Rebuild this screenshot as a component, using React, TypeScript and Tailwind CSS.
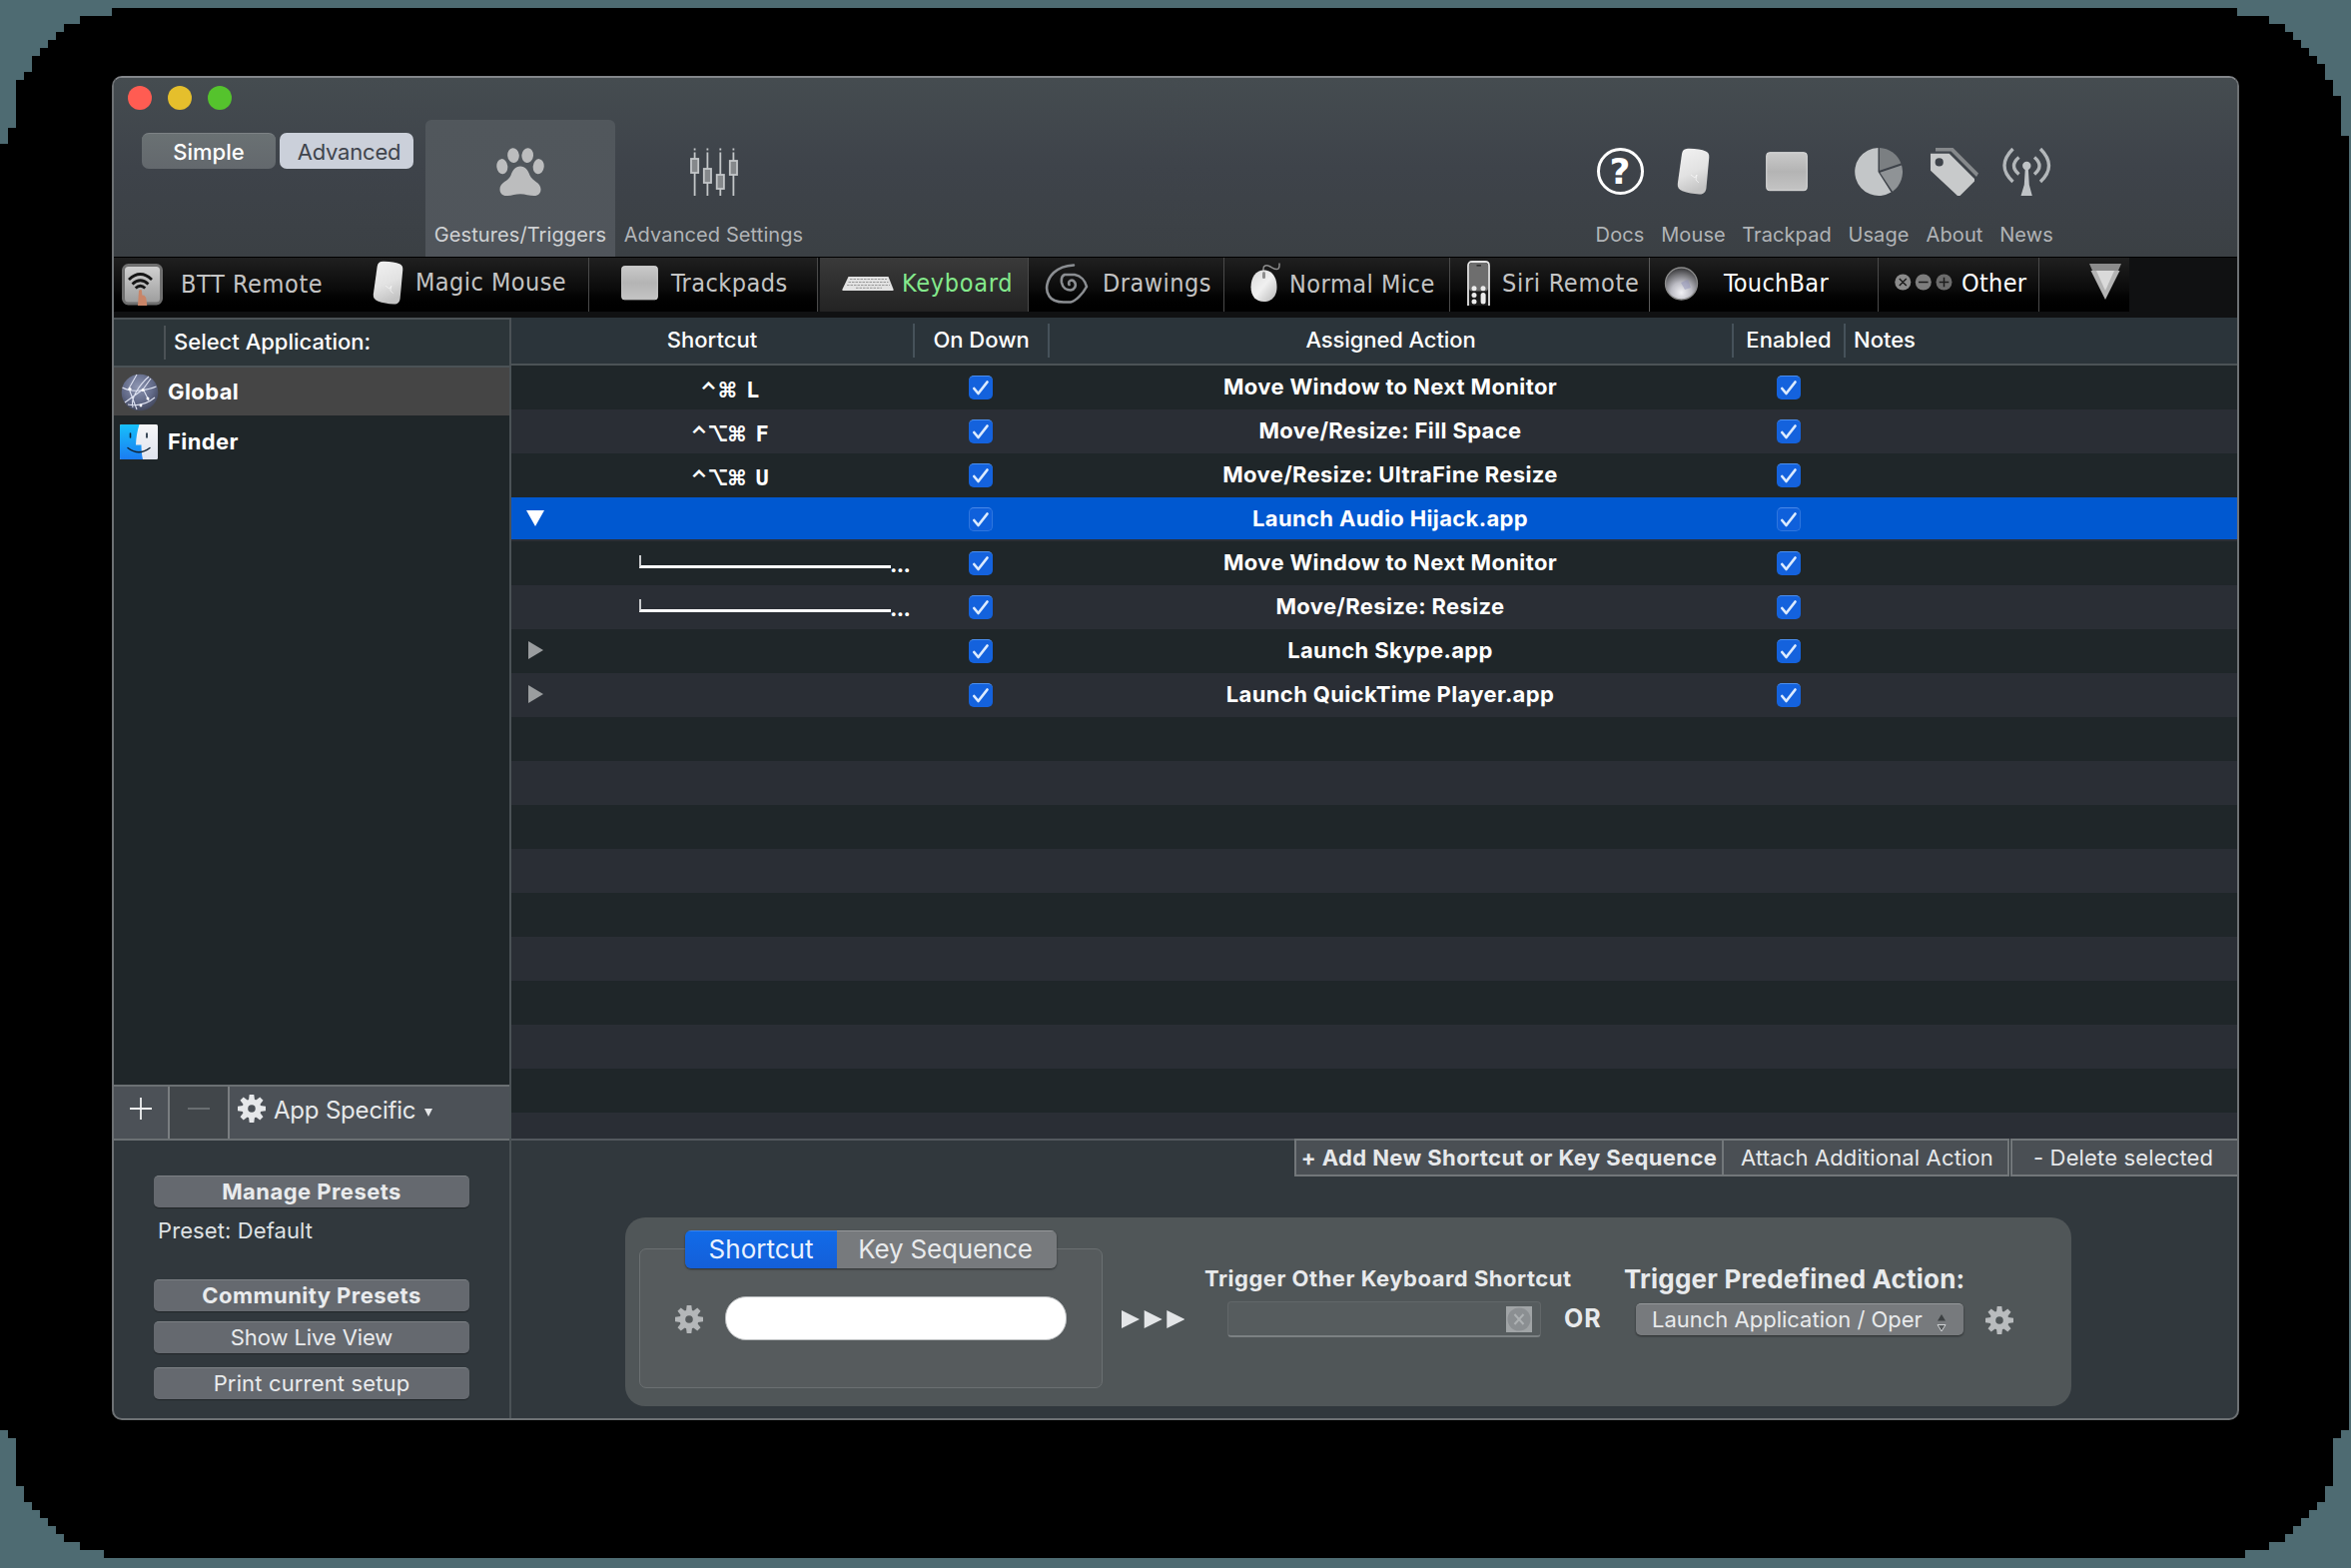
import React from "react";

const GEAR_TEETH = [0, 45, 90, 135, 180, 225, 270, 315];

function Gear({ size, color, hole }: { size: number; color: string; hole: string }) {
  return (
    <svg width={size} height={size} viewBox="0 0 28 28" className="shrink-0">
      <g fill={color}>
        {GEAR_TEETH.map((a) => (
          <path key={a} d="M11.7 0h4.6l.9 7h-6.4z" transform={`rotate(${a} 14 14)`} />
        ))}
        <circle cx="14" cy="14" r="9.6" />
      </g>
      <circle cx="14" cy="14" r="3.8" fill={hole} />
    </svg>
  );
}

function Paw() {
  return (
    <svg width="48" height="48" viewBox="0 0 48 48" fill="#bcbdbe">
      <ellipse cx="17" cy="7.6" rx="5.8" ry="7.4" transform="rotate(-6 17 7.6)" />
      <ellipse cx="31.2" cy="7.6" rx="5.8" ry="7.4" transform="rotate(6 31.2 7.6)" />
      <ellipse cx="5.8" cy="18.7" rx="5.5" ry="7.6" transform="rotate(-6 5.8 18.7)" />
      <ellipse cx="42.2" cy="18.7" rx="5.5" ry="7.6" transform="rotate(6 42.2 18.7)" />
      <path d="M24 18.500c5 0 7.500 3.500 9.500 9 2.500 6 11 7 11 14 0 4-2.500 6.500-6.500 6.500-5 0-9-1.800-14-1.800S15 48 10 48c-4 0-6.500-2.500-6.500-6.500 0-7 8.500-8 11-14 2-5.500 4.500-9 9.500-9z" />
    </svg>
  );
}

function Sliders() {
  const knobs: [number, number][] = [[4.6, 11], [17.4, 21], [30.3, 27], [43.4, 13]];
  return (
    <svg width="48" height="48" viewBox="0 0 48 48">
      {knobs.map(([x, y]) => (
        <g key={x}>
          <path d={`M${x} 4.500V48M${x} .5v2`} stroke="#c3c6c8" strokeWidth="1.800" />
          <rect x={x - 3.600} y={y} width="7.200" height="14" fill="#85888b" stroke="#c3c6c8" strokeWidth="1.800" />
        </g>
      ))}
    </svg>
  );
}

function MagicMouse({ w, h }: { w: number; h: number }) {
  return (
    <svg width={w} height={h} viewBox="0 0 33 47">
      <defs>
        <linearGradient id="mm" x1="0" y1="0" x2=".3" y2="1">
          <stop offset="0" stopColor="#f2f2f2" />
          <stop offset=".6" stopColor="#e2e2e2" />
          <stop offset="1" stopColor="#c4c4c4" />
        </linearGradient>
      </defs>
      <path d="M11 .7C18 .5 25 1.500 29 3.500c2.500 1.300 3.500 3 3.300 6L29.500 40c-.5 4.500-3 6.800-7 6.500-6-.5-12-1.500-17-3.300C2 41.800.5 39.500.8 36L5 6C5.500 2.500 7.500.8 11 .7z" fill="url(#mm)" />
      <path d="M14 27l4 3 2-3-1 5 3 3" fill="none" stroke="#fff" strokeOpacity=".6" />
    </svg>
  );
}

function PadIcon({ w, h }: { w: number; h: number }) {
  return (
    <svg width={w} height={h} viewBox="0 0 42 40" preserveAspectRatio="none">
      <defs>
        <linearGradient id="pad" x1="0" y1="0" x2="0" y2="1">
          <stop offset="0" stopColor="#c9c9c9" />
          <stop offset=".5" stopColor="#b4b4b4" />
          <stop offset="1" stopColor="#c4c4c4" />
        </linearGradient>
      </defs>
      <rect x=".7" y=".7" width="40.600" height="38" rx="3" fill="url(#pad)" stroke="#dedede" strokeWidth="1" />
    </svg>
  );
}

function UsagePie() {
  return (
    <svg width="48" height="48" viewBox="0 0 48 48">
      <path d="M23.500 0A24 24 0 1 0 36.500 44.600L23.500 24z" fill="#c3c6c8" />
      <path d="M25 0v22.800L46.400 15.500A24 24 0 0 0 25 0z" fill="#7b7f82" />
      <path d="M47 17.400L25.400 24.800 38 43.700A24 24 0 0 0 47 17.400z" fill="#8f9396" />
    </svg>
  );
}

function Tags() {
  return (
    <svg width="48" height="48" viewBox="0 0 48 48">
      <path d="M5 0h17.500L48 25.500 46 29 20.500 3.600H5z" fill="#85888b" />
      <path fillRule="evenodd" d="M0 5.700h18.700L44 31v2.500L29.500 48H27L0 22.700zM8.700 10.300a4.100 4.100 0 1 0 0 8.200 4.100 4.100 0 0 0 0-8.200z" fill="#c8cacb" />
    </svg>
  );
}

function Antenna() {
  return (
    <svg width="49" height="48" viewBox="0 0 49 48">
      <circle cx="24.300" cy="18" r="4.200" fill="#bfc3c6" />
      <path d="M22.800 20h3l1 17 3 11H18.500l3.300-11z" fill="#bfc3c6" />
      <g fill="none" stroke="#b3b7ba" strokeWidth="3.400">
        <path d="M16.500 9.500Q6.500 18 16.500 26.500M32 9.500Q42 18 32 26.500M10.500 1Q-6.500 18 10.500 34M38 1Q55 18 38 34" />
      </g>
    </svg>
  );
}

function RemoteIcon() {
  return (
    <svg width="41" height="42" viewBox="0 0 41 42">
      <defs>
        <linearGradient id="btt" x1="0" y1="0" x2="0" y2="1">
          <stop offset="0" stopColor="#d2d2d2" />
          <stop offset="1" stopColor="#9c9c9c" />
        </linearGradient>
      </defs>
      <rect x="1.500" y="1.500" width="38" height="38.500" rx="5" fill="url(#btt)" stroke="#6f6f6f" strokeWidth="3" />
      <g fill="none" stroke="#161616" strokeWidth="2.800">
        <path d="M7 16Q18.500 5 30 16" />
        <path d="M10.500 20.500Q18.500 13 26.500 20.500" />
        <path d="M13.700 24.500Q18.500 20 23.300 24.500" />
      </g>
      <path d="M16 42l1-15c1.500-1.500 3-1 3 .5l.3 4c3 0 4.200 2 4.300 5l.6 5.500z" fill="#c98568" />
    </svg>
  );
}

function KeyboardIcon() {
  return (
    <svg width="52" height="16" viewBox="0 0 52 16">
      <path d="M6.500 1h40l5 12.500v1.500H.5v-1.500z" fill="#e2e2e2" />
      <path d="M8 3.500h37M6.500 6.500h40M5 9.500h43M14 12.300h26" stroke="#9a9a9a" strokeWidth="1" strokeDasharray="2.500 1" />
    </svg>
  );
}

function Spiral() {
  return (
    <svg width="44" height="40" viewBox="0 0 44 40" fill="none" stroke="#8b8e92" strokeWidth="2.600" strokeLinecap="round" strokeLinejoin="round">
      <path d="M29 1.500C20 2 14 4.500 9 9 2 16 0 26 4.500 32.500 8 38 14 38.500 19 38.500h7c5-1 12-8 16-15.500C40.500 17 36 12 30 11H20c-2.500 1-3.500 4.500-3 8 1 5 5 7.500 9 7.500 4-.5 6-4.500 4-8-2.500-3.500-7-1.500-5.500 2.500" />
    </svg>
  );
}

function WiredMouse() {
  return (
    <svg width="31" height="40" viewBox="0 0 31 40">
      <defs>
        <linearGradient id="wm" x1="0" y1="0" x2="1" y2="1">
          <stop offset="0" stopColor="#d9d9d9" />
          <stop offset=".5" stopColor="#f0f0f0" />
          <stop offset="1" stopColor="#b5b5b5" />
        </linearGradient>
      </defs>
      <path d="M13 9V6c0-3 3-4 6-2.500 4 2 7 4.500 9 2.500 1.500-1.500 1-4 1-5.500" fill="none" stroke="#8d8d8d" strokeWidth="1.500" />
      <path d="M13.500 7.500c8 0 13 7 13 17 0 9-5 14.500-13 14.500S.5 33.500.5 24.500c0-10 5-17 13-17z" fill="url(#wm)" />
      <rect x="12" y="9" width="3" height="7" rx="1.500" fill="#8d8d8d" />
    </svg>
  );
}

function SiriRemote() {
  return (
    <svg width="23" height="46" viewBox="0 0 23 46">
      <path d="M1 45V5c0-2.500 1.500-4 4-4h13c2.500 0 4 1.500 4 4v40" fill="#1a1a1a" stroke="#e4e4e4" strokeWidth="1.800" />
      <rect x="2" y="2" width="19" height="28.500" rx="3" fill="#6e6e6e" />
      <rect x="9.500" y="4.200" width="4.500" height="1.300" fill="#222" />
      <g fill="#ececec">
        <circle cx="7" cy="27.800" r="2.500" />
        <circle cx="16" cy="27.800" r="2.500" />
        <circle cx="7" cy="34.500" r="2.500" />
        <circle cx="7" cy="41" r="2.500" />
        <rect x="13.600" y="32" width="5" height="11.500" rx="2.500" />
      </g>
    </svg>
  );
}

function Orb() {
  return (
    <svg width="35" height="34" viewBox="0 0 35 34" className="mb-0.5">
      <defs>
        <radialGradient id="orb" cx=".5" cy=".78" r=".8">
          <stop offset="0" stopColor="#f1f1f5" />
          <stop offset=".4" stopColor="#bcbcc4" />
          <stop offset=".75" stopColor="#6a6a6e" />
          <stop offset="1" stopColor="#2c2c2e" />
        </radialGradient>
      </defs>
      <circle cx="17.500" cy="17" r="16" fill="url(#orb)" stroke="#8b8b8b" strokeWidth="1.300" />
      <path d="M17 16l7-3 3 8-6 2z" fill="#8d8fb5" opacity=".5" />
    </svg>
  );
}

function OtherDots() {
  return (
    <svg width="58" height="17" viewBox="0 0 58 17" className="mb-1.5">
      <circle cx="8.300" cy="8.500" r="8" fill="#8b8b8b" />
      <circle cx="28.800" cy="8.500" r="8" fill="#7d7d7d" />
      <circle cx="49.500" cy="8.500" r="8" fill="#6c6c6c" />
      <path d="M4.800 5l7 7m0-7l-7 7M24 8.500h9.600M44.700 8.500h9.600M49.500 3.700v9.600" stroke="#1c1c1c" strokeWidth="1.500" />
    </svg>
  );
}

function GlobeIcon() {
  return (
    <svg width="38" height="38" viewBox="0 0 38 38">
      <defs>
        <radialGradient id="globe" cx=".45" cy=".35" r=".7">
          <stop offset="0" stopColor="#8f97b3" />
          <stop offset=".6" stopColor="#626a88" />
          <stop offset="1" stopColor="#3d4256" />
        </radialGradient>
      </defs>
      <circle cx="19" cy="19" r="18.300" fill="url(#globe)" />
      <g fill="none" stroke="#dfe3f2" strokeWidth="1.100">
        <path d="M1.500 14q7 4 17 3t17-4M28 3q-8 7-13 16t-3 15M4 29l18-13 8-11M16 1L8 15l8 21M7 31q15 3 27-7M23 17l5 10" />
      </g>
      <g fill="#fff">
        <circle cx="9" cy="15.500" r="1.600" />
        <circle cx="22" cy="16.500" r="1.600" />
        <circle cx="27" cy="25" r="1.500" />
        <circle cx="20" cy="32" r="1.400" />
      </g>
    </svg>
  );
}

function FinderIcon() {
  return (
    <svg width="38" height="35" viewBox="0 0 38 35">
      <defs>
        <linearGradient id="fa" x1="0" y1="0" x2="0" y2="1">
          <stop offset="0" stopColor="#17c0fa" />
          <stop offset="1" stopColor="#1b7cf2" />
        </linearGradient>
        <linearGradient id="fb" x1="0" y1="0" x2="0" y2="1">
          <stop offset="0" stopColor="#f6f6f8" />
          <stop offset="1" stopColor="#dfe4ee" />
        </linearGradient>
      </defs>
      <rect width="38" height="35" rx="1.500" fill="url(#fb)" />
      <path d="M1.500 0H19.500C17.500 6 16.300 13 16 20.500h5.500C21.500 26 22 31 23 35H1.500A1.500 1.500 0 0 1 0 33.500v-32A1.500 1.500 0 0 1 1.500 0z" fill="url(#fa)" />
      <path d="M10.500 9v4M27 9v4" stroke="#123" strokeWidth="1.600" strokeLinecap="round" />
      <path d="M8 23.500q11 8.500 22 0" fill="none" stroke="#123" strokeWidth="1.500" strokeLinecap="round" />
    </svg>
  );
}

function Check({ selected }: { selected?: boolean }) {
  return (
    <div
      className={
        selected
          ? "h-6 w-6 rounded-[5px] border border-[#2f76de] border-t-[#4a88e8] bg-[#0f60db]"
          : "h-6 w-6 rounded-[5px] border-t border-[#4a8ff0] bg-[#1462dd]"
      }
    >
      <svg width="24" height="24" viewBox="0 0 24 24" className={selected ? "-mt-px -ml-px" : "-mt-px"}>
        <path d="M5.300 13l4.200 5L18.500 6.500" fill="none" stroke="#dcebff" strokeWidth="2.700" strokeLinecap="round" strokeLinejoin="round" />
      </svg>
    </div>
  );
}

function ToolItem({ label, icon, className, padding }: { label: string; icon: React.ReactNode; className: string; padding?: string }) {
  return (
    <div className={`flex h-[137px] shrink-0 flex-col items-center ${className}`}>
      <div className={`mt-7 flex h-12 items-start justify-center ${padding ?? ""}`}>{icon}</div>
      <span className="mt-[29px] text-[20px] leading-5 tracking-[0.1px] whitespace-nowrap">{label}</span>
    </div>
  );
}

function Tab({ label, icon, className, textClass, tone }: { label?: string; icon: React.ReactNode; className: string; textClass?: string; tone?: string }) {
  return (
    <div className={`flex h-[54px] shrink-0 items-center ${tone ?? "bg-linear-to-b from-[#202020] via-[#0a0a0a] via-60% to-black"} ${className}`}>
      <div className="shrink-0">{icon}</div>
      {label && (
        <span className={`text-[25px] leading-[30px] whitespace-nowrap font-['DejaVu_Sans_Condensed','DejaVu_Sans',sans-serif] ${textClass}`}>{label}</span>
      )}
    </div>
  );
}

type Row = { kind: "keys" | "open" | "child" | "closed"; mods?: string; letter?: string; action: string };

const ROWS: Row[] = [
  { kind: "keys", mods: "⌃⌘", letter: "L", action: "Move Window to Next Monitor" },
  { kind: "keys", mods: "⌃⌥⌘", letter: "F", action: "Move/Resize: Fill Space" },
  { kind: "keys", mods: "⌃⌥⌘", letter: "U", action: "Move/Resize: UltraFine Resize" },
  { kind: "open", action: "Launch Audio Hijack.app" },
  { kind: "child", action: "Move Window to Next Monitor" },
  { kind: "child", action: "Move/Resize: Resize" },
  { kind: "closed", action: "Launch Skype.app" },
  { kind: "closed", action: "Launch QuickTime Player.app" },
];

function Shortcut({ row }: { row: Row }) {
  if (row.kind === "keys")
    return (
      <div className="flex w-[402px] shrink-0 items-center justify-center pt-[5px] pl-[34px]">
        <span className="flex text-[21px] leading-6 font-bold">
          {Array.from(row.mods ?? "").map((m) => (
            <span key={m} className="flex w-[19px] justify-center">{m}</span>
          ))}
        </span>
        <span className="ml-[9px] font-['DejaVu_Sans_Mono',monospace] text-[22px] leading-6 font-bold">{row.letter}</span>
      </div>
    );
  if (row.kind === "child")
    return (
      <div className="flex w-[402px] shrink-0 items-start pl-32">
        <div className="mt-[14px] h-[13px] w-[252px] shrink-0 border-b-[3px] border-l-2 border-b-white border-l-[#c9cbcd]" />
        <span className="mt-[11px] -ml-px text-[22px] leading-6 font-bold tracking-[-0.6px]">...</span>
      </div>
    );
  return (
    <div className="flex w-[402px] shrink-0 items-center">
      {row.kind === "open" ? (
        <svg width="18" height="16" viewBox="0 0 18 16" className="ml-[15px]"><path d="M0 0h18L9 16z" fill="#fff" /></svg>
      ) : (
        <svg width="15" height="18" viewBox="0 0 15 18" className="mb-[2px] ml-[17px]"><path d="M0 0l15 9-15 9z" fill="#9a9d9f" /></svg>
      )}
    </div>
  );
}

function TableRow({ row, index }: { row: Row; index: number }) {
  const tone = index % 2 ? "bg-[#2a2e35]" : "bg-[#1f2629]";
  return (
    <div className={`h-11 shrink-0 ${tone}`}>
      <div className={`flex ${row.kind === "open" ? "h-[42px] bg-[#0058d0]" : "h-11"}`}>
        <Shortcut row={row} />
        <div className="flex w-[136px] shrink-0 justify-center pt-[10px]"><Check selected={row.kind === "open"} /></div>
        <div className="w-[685px] shrink-0 pt-[6px] pr-px text-center text-[22px] leading-[31px] font-bold tracking-[0.36px]">{row.action}</div>
        <div className="flex w-[112px] shrink-0 justify-center pt-[10px]"><Check selected={row.kind === "open"} /></div>
      </div>
    </div>
  );
}

function PanelButton({ label, className }: { label: string; className: string }) {
  return (
    <div className={`flex h-8 w-[316px] items-center justify-center rounded-[5px] border-t border-[#7c8084] bg-[#65696f] pb-px text-[22px] leading-none text-[#e9ebed] shadow-[0_1px_1px_rgba(0,0,0,0.35)] ${className}`}>
      {label}
    </div>
  );
}

export default function App() {
  return (
    <div className="h-[1570px] w-[2354px] bg-[#4e6b72] font-['Inter',sans-serif]">
      <div className="h-[1570px] w-[2352px] bg-black pt-[76px] pl-28 [clip-path:polygon(112px_8px,2240px_8px,2240px_16px,2272px_16px,2272px_24px,2288px_24px,2288px_32px,2296px_32px,2296px_40px,2304px_40px,2304px_48px,2312px_48px,2312px_56px,2320px_56px,2320px_64px,2328px_64px,2328px_80px,2336px_80px,2336px_96px,2344px_96px,2344px_136px,2352px_136px,2352px_1432px,2344px_1432px,2344px_1440px,2336px_1440px,2336px_1488px,2328px_1488px,2328px_1504px,2320px_1504px,2320px_1512px,2312px_1512px,2312px_1520px,2304px_1520px,2304px_1528px,2296px_1528px,2296px_1536px,2288px_1536px,2288px_1544px,2272px_1544px,2272px_1552px,2248px_1552px,2248px_1560px,104px_1560px,104px_1552px,80px_1552px,80px_1544px,64px_1544px,64px_1536px,56px_1536px,56px_1528px,48px_1528px,48px_1520px,40px_1520px,40px_1512px,32px_1512px,32px_1504px,24px_1504px,24px_1488px,16px_1488px,16px_1440px,8px_1440px,8px_1432px,0px_1432px,0px_144px,8px_144px,8px_128px,16px_128px,16px_80px,24px_80px,24px_72px,32px_72px,32px_56px,40px_56px,40px_48px,48px_48px,48px_40px,56px_40px,56px_32px,64px_32px,64px_24px,80px_24px,80px_16px,112px_16px)]">
        <div className="flex h-[1346px] w-[2130px] flex-col overflow-hidden rounded-[10px] border-2 border-[#6d7174] border-t-[#83868a] bg-[#31383d]">
          {/* Title bar and toolbar */}
          <div className="flex h-[179px] shrink-0 bg-linear-to-b from-[#454c50] via-[#3e434a] via-50% to-[#3b4044] text-[#b1b4b7]">
            <div className="w-[312px] shrink-0">
              <div className="mt-2 ml-[14px] flex gap-4">
                <div className="h-6 w-6 rounded-full bg-[#ff5c52]" />
                <div className="h-6 w-6 rounded-full bg-[#e5bf2c]" />
                <div className="h-6 w-6 rounded-full bg-[#55c32d]" />
              </div>
              <div className="mt-[23px] ml-7 flex gap-1 text-[22px] leading-none">
                <div className="flex h-9 w-[134px] items-center justify-center rounded-[7px] border-t border-[#7d8285] bg-linear-to-b from-[#6a7173] to-[#63686d] font-medium text-white">Simple</div>
                <div className="flex h-9 w-[134px] items-center justify-center rounded-[7px] bg-[#cbd0da] pt-px pl-[5px] tracking-[-0.2px] text-[#40444c]">Advanced</div>
              </div>
            </div>
            <ToolItem label="Gestures/Triggers" icon={<Paw />} className="w-[190px] self-end rounded-t-[6px] bg-linear-to-b from-[#51575c] to-[#50555b] text-[#d0d2d4]" />
            <ToolItem label="Advanced Settings" icon={<Sliders />} className="ml-2 w-[181px] self-end" />
            <div className="mr-[185px] ml-auto flex gap-[18px] self-end">
              <ToolItem
                label="Docs"
                className="w-12"
                icon={
                  <div className="flex h-[47px] w-[47px] items-center justify-center rounded-full border-[3.5px] border-white font-['DejaVu_Sans',sans-serif] text-[36px] leading-none font-bold text-white">?</div>
                }
              />
              <ToolItem label="Mouse" className="w-[63px]" icon={<MagicMouse w={33} h={47} />} />
              <ToolItem label="Trackpad" className="w-[88px]" padding="pt-1" icon={<PadIcon w={42} h={40} />} />
              <ToolItem label="Usage" className="w-[60px]" icon={<UsagePie />} />
              <ToolItem label="About" className="w-[56px]" icon={<Tags />} />
              <ToolItem label="News" className="w-[52px]" icon={<Antenna />} />
            </div>
          </div>

          {/* Device tabs */}
          <div className="flex h-[61px] shrink-0 border-t border-black bg-[#101112] text-[#c4c4c4]">
            <Tab label="BTT Remote" icon={<RemoteIcon />} className="w-[256px] pl-2" textClass="ml-[18px] mb-[1px] tracking-[0.6px]" />
            <Tab label="Magic Mouse" icon={<MagicMouse w={31} h={44} />} className="w-[220px] border-r border-[#4a4a4a] pb-1 pl-[3px]" textClass="ml-3 mb-[1px] tracking-[0.45px]" />
            <Tab label="Trackpads" icon={<PadIcon w={37} h={35} />} className="w-[229px] border-r border-[#4a4a4a] pb-[3px] pl-8" textClass="ml-[13px] tracking-[0.45px]" />
            <Tab label="Keyboard" icon={<KeyboardIcon />} className="ml-[2px] w-[209px] border-r border-[#4a4a4a] pb-[3px] pl-[22px]" tone="bg-linear-to-b from-[#3a3a3a] to-[#232323]" textClass="ml-[8px] tracking-[0.7px] text-[#84e98c]" />
            <Tab label="Drawings" icon={<Spiral />} className="w-[196px] border-r border-[#4a4a4a] pb-[3px] pl-4" textClass="ml-[14px] tracking-[0.45px]" />
            <Tab label="Normal Mice" icon={<WiredMouse />} className="w-[226px] border-r border-[#4a4a4a] pb-1 pl-[26px]" textClass="ml-[8px] mt-1 tracking-[0.5px]" />
            <Tab label="Siri Remote" icon={<SiriRemote />} className="w-[200px] border-r border-[#5a5a5a] pb-[3px] pl-[17px]" textClass="ml-[12px] tracking-[0.7px]" />
            <Tab label="TouchBar" icon={<Orb />} className="w-[229px] border-r border-[#4a4a4a] pl-[14px]" textClass="ml-[25px] mb-[3px] tracking-[0.3px] text-white" />
            <Tab label="Other" icon={<OtherDots />} className="w-[161px] border-r border-[#4a4a4a] pl-4" textClass="ml-[9px] mb-[3px] tracking-[0.3px] text-white" />
            <Tab
              className="w-[90px] pl-[50px]"
              icon={
                <svg width="32" height="36" viewBox="0 0 32 36" className="mb-1.5">
                  <path d="M0 0h32l-3.500 8h-25z" fill="#8c8c8c" />
                  <path d="M1.500 7h29L16 36z" fill="#b4b4b4" />
                  <path d="M7 7h18l-9 20z" fill="#dadada" />
                </svg>
              }
            />
          </div>

          <div className="flex min-h-0 flex-1">
            {/* Application list */}
            <div className="flex w-[398px] shrink-0 flex-col border-r-2 border-[#4b5256]">
              <div className="flex h-[50px] shrink-0 border-y-2 border-[#4b5256] bg-[#2c3539] text-white">
                <div className="mt-1.5 ml-[50px] h-[34px] w-0.5 bg-[#4b5256]" />
                <span className="ml-2 pt-[7px] text-[22px] leading-[30px] font-medium">Select Application:</span>
              </div>
              <div className="flex min-h-0 flex-1 flex-col bg-[#1f2629] text-[22px] font-bold tracking-[0.4px] text-white">
                <div className="flex h-12 items-center bg-[#454545] pl-[7px]">
                  <span className="mt-0.5"><GlobeIcon /></span>
                  <span className="ml-[9px]">Global</span>
                </div>
                <div className="flex h-[52px] items-center pl-[6px]">
                  <FinderIcon />
                  <span className="ml-[10px]">Finder</span>
                </div>
              </div>
              <div className="flex h-14 shrink-0 border-y-2 border-[#6b7073] bg-[#4c5157]">
                <div className="flex w-14 justify-center border-r-2 border-[#7a7e81] pt-[11px]">
                  <svg width="22" height="22" viewBox="0 0 22 22"><path d="M0 11h22M11 0v22" stroke="#f0f1f2" strokeWidth="1.800" /></svg>
                </div>
                <div className="flex w-[60px] justify-center border-r-2 border-[#7a7e81] bg-[#41464a] pt-[11px]">
                  <svg width="22" height="22" viewBox="0 0 22 22"><path d="M0 11h22" stroke="#6f7376" strokeWidth="1.800" /></svg>
                </div>
                <div className="flex flex-1 items-start pt-2 pl-2 text-[#e6e8ea]">
                  <Gear size={28} color="#e6e8ea" hole="#4c5157" />
                  <span className="ml-2 pt-[2px] text-[24px] leading-7 tracking-[-0.2px]">App Specific</span>
                  <svg width="8" height="8" viewBox="0 0 8 8" className="mt-[14px] ml-[9px]"><path d="M0 0h8L4 8z" fill="#e6e8ea" /></svg>
                </div>
              </div>
              <div className="flex h-[278px] shrink-0 flex-col pt-[35px] pl-10">
                <PanelButton label="Manage Presets" className="font-bold tracking-[0.45px]" />
                <span className="mt-[11px] ml-1 text-[22px] leading-6 tracking-[0.1px] text-[#dfe2e4]">Preset: Default</span>
                <PanelButton label="Community Presets" className="mt-[37px] font-bold tracking-[0.45px]" />
                <PanelButton label="Show Live View" className="mt-[10px] tracking-[-0.1px]" />
                <PanelButton label="Print current setup" className="mt-[14px] tracking-[0.15px]" />
              </div>
            </div>

            {/* Shortcut table and editor */}
            <div className="flex min-w-0 flex-1 flex-col">
              <div className="flex h-12 shrink-0 border-b-2 border-[#4b5256] bg-[#2b343a] pt-[6px] text-center text-[22px] leading-[32px] font-medium text-white">
                <span className="h-[34px] w-[404px] shrink-0 border-r-2 border-[#46525a]">Shortcut</span>
                <span className="h-[34px] w-[135px] shrink-0 border-r-2 border-[#46525a]">On Down</span>
                <span className="h-[34px] w-[685px] shrink-0 border-r-2 border-[#46525a] tracking-[-0.1px]">Assigned Action</span>
                <span className="h-[34px] w-[112px] shrink-0 border-r-2 border-[#46525a] tracking-[0.1px]">Enabled</span>
                <span className="ml-2">Notes</span>
              </div>
              <div className="flex h-[774px] shrink-0 flex-col overflow-hidden text-white">
                {ROWS.map((r, i) => (
                  <TableRow key={i} row={r} index={i} />
                ))}
                {Array.from({ length: 10 }, (_, i) => (
                  <div key={i} className={`h-11 shrink-0 ${i % 2 ? "bg-[#2a2e35]" : "bg-[#1f2629]"}`} />
                ))}
              </div>

              <div className="flex h-[38px] shrink-0 text-[22px] leading-none text-[#e6e8ea]">
                <div className="flex-1 border-t-2 border-[#53585e]" />
                <div className="flex w-[430px] items-center justify-center border-2 border-[#72777a] bg-[#4a4f54] pb-px font-bold tracking-[0.4px] whitespace-nowrap">+ Add New Shortcut or Key Sequence</div>
                <div className="flex w-[286px] items-center justify-center border-y-2 border-r-2 border-[#72777a] bg-[#4a4f54] pb-px pl-[3px] tracking-[0.15px]">Attach Additional Action</div>
                <div className="ml-px flex w-[227px] items-center border-y-2 border-l-2 border-[#72777a] bg-[#4a4f54] pb-px pl-[21px] tracking-[0.15px]">- Delete selected</div>
              </div>

              <div className="mt-[41px] ml-[114px] flex h-[189px] w-[1448px] items-start rounded-[20px] bg-[#505658] text-[#e8eaec]">
                <div className="mt-[31px] ml-[14px] h-[140px] w-[464px] shrink-0 rounded-[7px] border border-[#6b7072] bg-[#565b5d]">
                  <div className="-mt-[19px] ml-[45px] flex h-[38px] w-[372px] overflow-hidden rounded-[6px] text-[26px] leading-none shadow-[0_1px_2px_rgba(0,0,0,0.5)]">
                    <div className="flex w-[152px] items-center justify-center border-t border-[#3b84ee] bg-linear-to-b from-[#116be8] to-[#145fd9] pb-px text-[#e9f2ff]">Shortcut</div>
                    <div className="flex flex-1 items-center justify-center border-t border-[#96999b] bg-[#777a7d] pr-[3px] pb-px tracking-[-0.2px]">Key Sequence</div>
                  </div>
                  <div className="mt-7 ml-[35px] flex items-center">
                    <span className="mt-0.5"><Gear size={28} color="#b4b7b9" hole="#565b5d" /></span>
                    <div className="ml-[22px] h-11 w-[342px] rounded-[21px] border border-[#b9bcbe] bg-white" />
                  </div>
                </div>
                <svg width="63" height="18" viewBox="0 0 63 18" className="mt-[93px] ml-[19px] shrink-0">
                  <path d="M0 0l18 9-18 9zM22.700 0l18 9-18 9zM45.300 0l18 9-18 9z" fill="#e3e5e7" />
                </svg>
                <div className="mt-[46px] ml-[20px] flex w-[370px] shrink-0 flex-col">
                  <span className="text-[22px] leading-[30px] font-bold tracking-[0.5px] whitespace-nowrap">Trigger Other Keyboard Shortcut</span>
                  <div className="mt-2 ml-[23px] flex h-9 w-[314px] justify-end rounded-[4px] border border-b-2 border-[#626769] border-b-[#7c8183] bg-[#565c5e] pt-1 pr-2">
                    <svg width="26" height="26" viewBox="0 0 26 26">
                      <rect width="26" height="26" fill="#a0a4a6" />
                      <circle cx="13" cy="13" r="11.500" fill="#8b8f92" />
                      <path d="M8.500 8l9 10m0-10l-9 10" stroke="#adb1b3" strokeWidth="2" />
                    </svg>
                  </div>
                </div>
                <span className="mt-[86px] ml-[-10px] w-[60px] shrink-0 text-[25px] leading-[30px] font-bold tracking-[1px]">OR</span>
                <div className="mt-[47px] flex w-[340px] shrink-0 flex-col">
                  <span className="text-[26px] leading-[30px] font-bold tracking-[0.2px] whitespace-nowrap">Trigger Predefined Action:</span>
                  <div className="mt-[9px] ml-3 flex h-8 w-[328px] items-center rounded-[5px] border-t border-[#96999b] bg-[#777a7d] shadow-[0_1px_2px_rgba(0,0,0,0.5)]">
                    <span className="ml-4 pb-px text-[22px] leading-none whitespace-nowrap">Launch Application / Oper</span>
                    <svg width="12" height="18" viewBox="0 0 12 18" className="mt-1.5 ml-[13px]">
                      <path d="M6 0l4 6.500h-8z" fill="#3c4042" />
                      <path d="M2 10.500h8L6 17z" fill="#55595b" stroke="#d0d3d5" strokeWidth="1" />
                    </svg>
                  </div>
                </div>
                <div className="mt-[89px] ml-[22px]"><Gear size={28} color="#b9bcbe" hole="#505658" /></div>
              </div>
            </div>
          </div>
        </div>
      </div>
    </div>
  );
}
